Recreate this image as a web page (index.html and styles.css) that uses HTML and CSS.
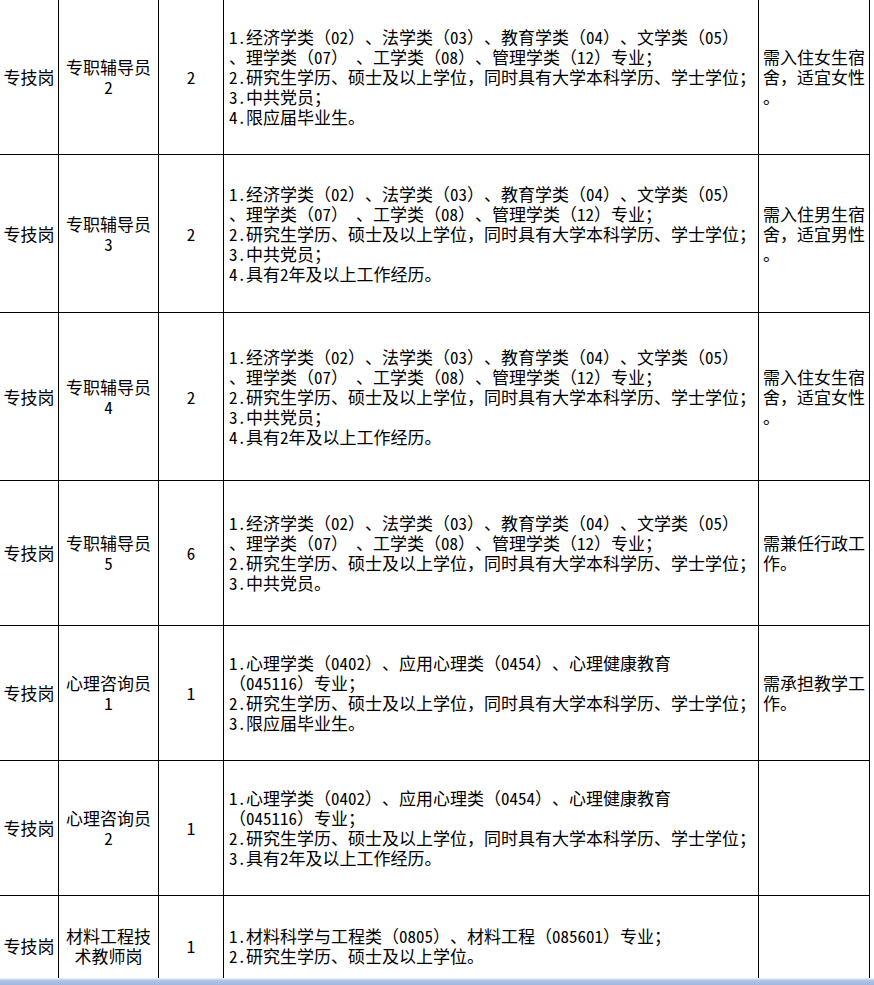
FILE: index.html
```html
<!DOCTYPE html>
<html lang="zh-CN">
<head>
<meta charset="utf-8">
<title>岗位表</title>
<link rel="stylesheet" href="styles.css">
</head>
<body>
<div class="sheet">
  <div class="c c1"><div class="t">专技岗</div></div>
  <div class="c c2"><div class="t">专职辅导员<br><span class="h h1">2</span></div></div>
  <div class="c c3"><div class="t"><span class="h h1">2</span></div></div>
  <div class="c c4"><div class="t"><span class="h h2">1.</span>经济学类（<span class="h h2">02</span>）、法学类（<span class="h h2">03</span>）、教育学类（<span class="h h2">04</span>）、文学类（<span class="h h2">05</span>）<br>、理学类（<span class="h h2">07</span>）<span class="sp"></span>、工学类（<span class="h h2">08</span>）、管理学类（<span class="h h2">12</span>）专业；<br><span class="h h2">2.</span>研究生学历、硕士及以上学位，同时具有大学本科学历、学士学位；<br><span class="h h2">3.</span>中共党员；<br><span class="h h2">4.</span>限应届毕业生。</div></div>
  <div class="c c5"><div class="t">需入住女生宿<br>舍，适宜女性<br>。</div></div>

  <div class="c c1"><div class="t">专技岗</div></div>
  <div class="c c2"><div class="t">专职辅导员<br><span class="h h1">3</span></div></div>
  <div class="c c3"><div class="t"><span class="h h1">2</span></div></div>
  <div class="c c4"><div class="t"><span class="h h2">1.</span>经济学类（<span class="h h2">02</span>）、法学类（<span class="h h2">03</span>）、教育学类（<span class="h h2">04</span>）、文学类（<span class="h h2">05</span>）<br>、理学类（<span class="h h2">07</span>）<span class="sp"></span>、工学类（<span class="h h2">08</span>）、管理学类（<span class="h h2">12</span>）专业；<br><span class="h h2">2.</span>研究生学历、硕士及以上学位，同时具有大学本科学历、学士学位；<br><span class="h h2">3.</span>中共党员；<br><span class="h h2">4.</span>具有<span class="h h1">2</span>年及以上工作经历。</div></div>
  <div class="c c5"><div class="t">需入住男生宿<br>舍，适宜男性<br>。</div></div>

  <div class="c c1"><div class="t">专技岗</div></div>
  <div class="c c2"><div class="t">专职辅导员<br><span class="h h1">4</span></div></div>
  <div class="c c3"><div class="t"><span class="h h1">2</span></div></div>
  <div class="c c4"><div class="t"><span class="h h2">1.</span>经济学类（<span class="h h2">02</span>）、法学类（<span class="h h2">03</span>）、教育学类（<span class="h h2">04</span>）、文学类（<span class="h h2">05</span>）<br>、理学类（<span class="h h2">07</span>）<span class="sp"></span>、工学类（<span class="h h2">08</span>）、管理学类（<span class="h h2">12</span>）专业；<br><span class="h h2">2.</span>研究生学历、硕士及以上学位，同时具有大学本科学历、学士学位；<br><span class="h h2">3.</span>中共党员；<br><span class="h h2">4.</span>具有<span class="h h1">2</span>年及以上工作经历。</div></div>
  <div class="c c5"><div class="t">需入住女生宿<br>舍，适宜女性<br>。</div></div>

  <div class="c c1"><div class="t">专技岗</div></div>
  <div class="c c2"><div class="t">专职辅导员<br><span class="h h1">5</span></div></div>
  <div class="c c3"><div class="t"><span class="h h1">6</span></div></div>
  <div class="c c4"><div class="t"><span class="h h2">1.</span>经济学类（<span class="h h2">02</span>）、法学类（<span class="h h2">03</span>）、教育学类（<span class="h h2">04</span>）、文学类（<span class="h h2">05</span>）<br>、理学类（<span class="h h2">07</span>）<span class="sp"></span>、工学类（<span class="h h2">08</span>）、管理学类（<span class="h h2">12</span>）专业；<br><span class="h h2">2.</span>研究生学历、硕士及以上学位，同时具有大学本科学历、学士学位；<br><span class="h h2">3.</span>中共党员。</div></div>
  <div class="c c5"><div class="t">需兼任行政工<br>作。</div></div>

  <div class="c c1"><div class="t">专技岗</div></div>
  <div class="c c2"><div class="t">心理咨询员<br><span class="h h1">1</span></div></div>
  <div class="c c3"><div class="t"><span class="h h1">1</span></div></div>
  <div class="c c4"><div class="t"><span class="h h2">1.</span>心理学类（<span class="h h4">0402</span>）、应用心理类（<span class="h h4">0454</span>）、心理健康教育<br>（<span class="h h6">045116</span>）专业；<br><span class="h h2">2.</span>研究生学历、硕士及以上学位，同时具有大学本科学历、学士学位；<br><span class="h h2">3.</span>限应届毕业生。</div></div>
  <div class="c c5"><div class="t">需承担教学工<br>作。</div></div>

  <div class="c c1"><div class="t">专技岗</div></div>
  <div class="c c2"><div class="t">心理咨询员<br><span class="h h1">2</span></div></div>
  <div class="c c3"><div class="t"><span class="h h1">1</span></div></div>
  <div class="c c4"><div class="t"><span class="h h2">1.</span>心理学类（<span class="h h4">0402</span>）、应用心理类（<span class="h h4">0454</span>）、心理健康教育<br>（<span class="h h6">045116</span>）专业；<br><span class="h h2">2.</span>研究生学历、硕士及以上学位，同时具有大学本科学历、学士学位；<br><span class="h h2">3.</span>具有<span class="h h1">2</span>年及以上工作经历。</div></div>
  <div class="c c5"></div>

  <div class="c c1"><div class="t">专技岗</div></div>
  <div class="c c2"><div class="t">材料工程技<br>术教师岗</div></div>
  <div class="c c3"><div class="t"><span class="h h1">1</span></div></div>
  <div class="c c4"><div class="t"><span class="h h2">1.</span>材料科学与工程类（<span class="h h4">0805</span>）、材料工程（<span class="h h6">085601</span>）专业；<br><span class="h h2">2.</span>研究生学历、硕士及以上学位。</div></div>
  <div class="c c5"></div>
</div>
<div class="statusbar"></div>
</body>
</html>
```

FILE: styles.css
```css
html, body {
  margin: 0;
  padding: 0;
  background: #fff;
  height: 985px;
  overflow: hidden;
}

body {
  font-family: "Noto Sans CJK SC", "Noto Sans CJK TC", sans-serif;
  font-size: 17px;
  line-height: 20px;
  color: #000;
  text-spacing-trim: space-all;
  font-kerning: none;
  font-feature-settings: "kern" 0, "chws" 0, "halt" 0, "palt" 0;
}

.sheet {
  display: grid;
  width: max-content;
  grid-template-columns: 58px 99px 64px 534px 110px;
  grid-template-rows: 154px 157px 167px 144px 134px 134px 100px;
  gap: 1px;
  padding-right: 1px;
  background: #000;
}

.c {
  background: #fff;
  display: flex;
  flex-direction: column;
  justify-content: center;
  white-space: nowrap;
}

.c1, .c2, .c3 {
  align-items: center;
  text-align: center;
}

.c4 {
  padding-left: 5px;
}

.c5 {
  padding-left: 4px;
}

.h {
  display: inline-block;
  text-align: center;
  font-feature-settings: "hwid" 1, "kern" 0;
}

.h1 { width: 0.5em; }
.h2 { width: 1em; }
.h4 { width: 2em; }
.h6 { width: 3em; }

.sp {
  display: inline-block;
  width: 8px;
}

.statusbar {
  position: fixed;
  left: 0;
  right: 0;
  bottom: 0;
  height: 7px;
  background: linear-gradient(#e4ebf4 0, #e4ebf4 1px, #b3c7e2 2px, #9fb7da 100%);
}
```
